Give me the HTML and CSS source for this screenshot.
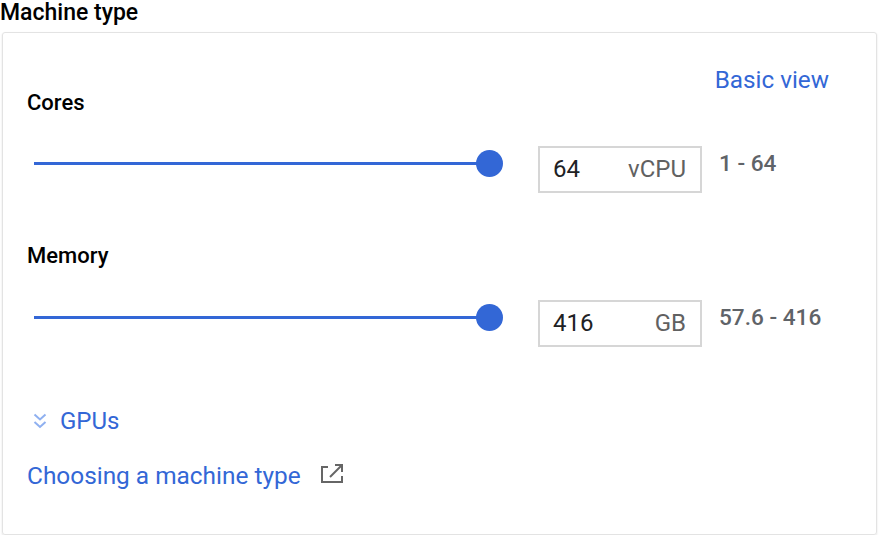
FILE: index.html
```html
<!DOCTYPE html>
<html>
<head>
<meta charset="utf-8">
<link rel="stylesheet" href="styles.css">
</head>
<body>
<div class="page">
  <div class="title">Machine type</div>
  <div class="card">
    <div class="header">
      <div class="label label-first">Cores</div>
      <a class="link basic">Basic view</a>
    </div>
    <div class="row row-first">
      <div class="slider"><div class="track"></div><div class="knob"></div></div>
      <div class="box"><span class="val">64</span><span class="unit">vCPU</span></div>
      <div class="range">1 - 64</div>
    </div>
    <div class="label label-mem">Memory</div>
    <div class="row row-mem">
      <div class="slider"><div class="track"></div><div class="knob"></div></div>
      <div class="box"><span class="val">416</span><span class="unit">GB</span></div>
      <div class="range">57.6 - 416</div>
    </div>
    <div class="gpus">
      <svg class="chev" width="14" height="17" viewBox="0 0 14 17"><polyline points="1.5,1.5 7,6.5 12.5,1.5" /><polyline points="1.5,9 7,14 12.5,9" /></svg>
      <span class="link">GPUs</span>
    </div>
    <div class="choose">
      <a class="link choose-text">Choosing a machine type</a>
      <svg class="ext" width="22" height="20" viewBox="0 0 22 20"><path d="M7 3 H1 V18 H21 V12" /><path d="M14 1 H21 V8" /><path d="M21 1 L9 13" /></svg>
    </div>
  </div>
</div>
</body>
</html>
```
FILE: styles.css
```css
html, body {
  margin: 0;
  padding: 0;
  background: #ffffff;
}
body {
  font-family: Roboto, "Liberation Sans", Arial, sans-serif;
  color: #000;
}
.page {
  padding: 0 3px 0 2px;
}
.title {
  font-size: 23px;
  font-weight: 500;
  line-height: 26px;
  margin-left: -2px;
  margin-bottom: 6px;
}
.card {
  border: 1px solid #e3e3e3;
  border-radius: 3px;
  box-shadow: 0 1px 2px rgba(0,0,0,0.12);
  padding: 33px 47px 44px 24px;
  height: 424px;
}
.header {
  display: flex;
  justify-content: space-between;
  align-items: flex-start;
}
.label {
  font-size: 22px;
  font-weight: 500;
  line-height: 26px;
}
.label-first {
  margin-top: 24px;
}
.label-mem {
  margin-top: 50px;
}
.link {
  color: #3367d6;
  font-size: 24px;
  line-height: 28px;
  text-decoration: none;
}
.basic {
  font-size: 24.3px;
}
.choose-text {
  font-size: 24.4px;
}
.row {
  display: flex;
  align-items: flex-start;
}
.row-first {
  margin-top: 30px;
}
.row-mem {
  margin-top: 31px;
}
.slider {
  width: 469px;
  height: 35px;
  margin-left: 7px;
  display: flex;
  align-items: center;
}
.track {
  flex: 1;
  height: 3px;
  background: #3367d6;
}
.knob {
  width: 27px;
  height: 27px;
  border-radius: 50%;
  background: #3367d6;
  margin-left: -13px;
  flex: none;
}
.box {
  margin-left: 35px;
  width: 164px;
  height: 47px;
  box-sizing: border-box;
  border: 2px solid #d6d6d6;
  display: flex;
  justify-content: space-between;
  padding: 0 14px 0 13px;
  font-size: 24px;
  line-height: 43px;
}
.val {
  color: #202124;
}
.unit {
  color: #616161;
}
.range {
  margin-left: 17px;
  font-size: 22.6px;
  font-weight: 500;
  line-height: 35px;
  color: #5f6368;
}
.gpus {
  margin-top: 60px;
  display: flex;
  align-items: center;
  margin-left: 6px;
}
.chev {
  fill: none;
  stroke: #8fb0f0;
  stroke-width: 2;
  margin-right: 13px;
}
.choose {
  margin-top: 27px;
  display: flex;
  align-items: center;
}
.ext {
  fill: none;
  stroke: #666;
  stroke-width: 2;
  margin-left: 20px;
  margin-top: -4px;
}
```
